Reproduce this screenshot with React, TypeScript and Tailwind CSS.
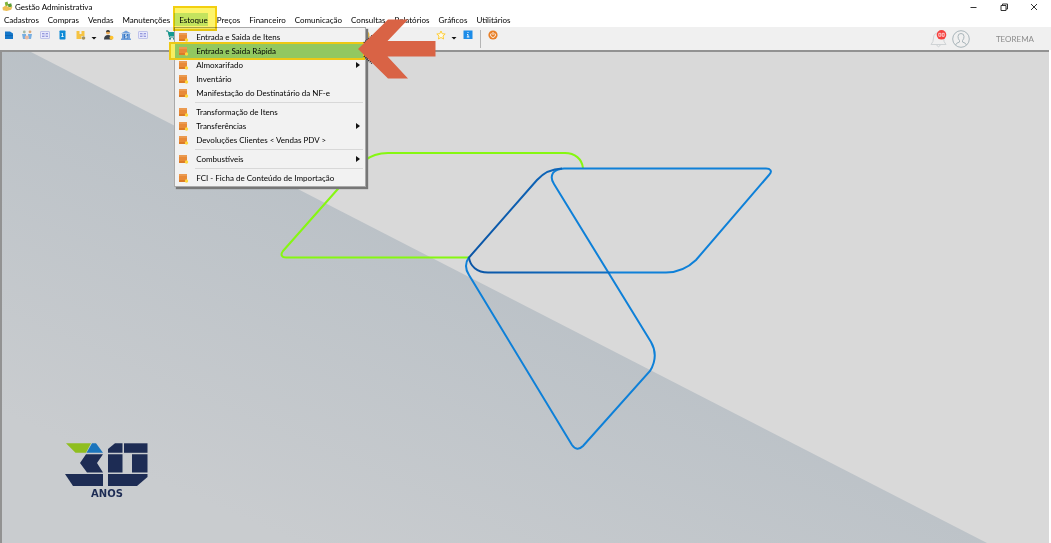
import type { ReactNode } from 'react'

const menusBefore = ['Cadastros', 'Compras', 'Vendas', 'Manutenções']
const menusAfter = ['Preços', 'Financeiro', 'Comunicação', 'Consultas', 'Relatórios', 'Gráficos', 'Utilitários']

type Entry = { label: string; sub?: boolean; active?: boolean }
const groups: Entry[][] = [
  [
    { label: 'Entrada e Saida de Itens' },
    { label: 'Entrada e Saida Rápida', active: true },
    { label: 'Almoxarifado', sub: true },
    { label: 'Inventário' },
    { label: 'Manifestação do Destinatário da NF-e' },
  ],
  [
    { label: 'Transformação de Itens' },
    { label: 'Transferências', sub: true },
    { label: 'Devoluções Clientes < Vendas PDV >' },
  ],
  [{ label: 'Combustíveis', sub: true }],
  [{ label: 'FCI - Ficha de Conteúdo de Importação' }],
]

function BoxIcon() {
  return (
    <svg viewBox="0 0 10 10" className="block size-[10px] shrink-0" aria-hidden="true">
      <rect x="0" y="1" width="8" height="8" fill="#e88a38" />
      <path d="M0 1h8v2h-8z" fill="#eb9a50" />
      <path d="M0 7h8v2h-8z" fill="#dc7a26" />
      <circle cx="7.500" cy="8" r="1.700" fill="#ffd83a" />
    </svg>
  )
}

function Tool({ label, children }: { label: string; children: ReactNode }) {
  return (
    <button type="button" aria-label={label} className="block size-[10px] shrink-0">
      <svg viewBox="0 0 10 10" className="block size-[10px]">{children}</svg>
    </button>
  )
}

function DropTool({ label, children }: { label: string; children: ReactNode }) {
  return (
    <button type="button" aria-label={label} aria-haspopup="menu" className="block h-[10px] w-[22px] shrink-0">
      <svg viewBox="0 0 22 10" className="block h-[10px] w-[22px]">
        {children}
        <path d="M15.500 7h5l-2.500 2.500z" fill="#111" />
      </svg>
    </button>
  )
}

function Card() {
  return (
    <>
      <rect x=".5" y="1.500" width="9" height="7" rx=".6" fill="#e9eafc" stroke="#b3b6e6" strokeWidth=".8" />
      <path d="M2 3.700h2.500M5.700 3.700h2.300M2 6.300h2.500M5.700 6.300h2.300" stroke="#8286d4" />
      <path d="M2.200 5h5.500" stroke="#b5b8ea" strokeWidth=".7" />
    </>
  )
}

function Artwork() {
  return (
    <svg viewBox="0 0 1047 491" preserveAspectRatio="xMidYMid slice" className="absolute inset-0 size-full" aria-hidden="true">
      <defs>
        <linearGradient id="slope" gradientUnits="userSpaceOnUse" x1="330" y1="150" x2="180" y2="492">
          <stop offset="0" stopColor="#b9c0c6" />
          <stop offset="1" stopColor="#c9cccf" />
        </linearGradient>
        <linearGradient id="fold" gradientUnits="userSpaceOnUse" x1="468" y1="0" x2="612" y2="0">
          <stop offset="0" stopColor="#0b55a5" />
          <stop offset="1" stopColor="#0f6fc4" />
        </linearGradient>
      </defs>
      <g transform="translate(-2 -52)">
        <path d="M0 51H29L987 543H0z" fill="url(#slope)" />
        <g fill="none" strokeWidth="2">
          <path d="M583 168C582 159 575 153 565 153H388Q374 153 364 161Q358 165 352 173L283 251C280 255 282 257.500 286 257.500H469" stroke="#86f711" />
          <path d="M610 272.500H666Q683 272.500 696 260L769 175C773 171 770 168.500 766 168.500H564Q556 169 553 173Q550 178 554 184L651 342Q659 356 650 371L583 446Q577 452 572 445L469 275Q463 266 469 257" stroke="#0e80d8" />
          <path d="M562 168.500Q547 169 537 180L469 257.500C470 266 477 272.500 488 272.500H610" stroke="url(#fold)" />
        </g>
        <g fill="#1d2c54">
          <path d="M66 443.300H91L86 452.800H75.500z" fill="#8fbe1f" />
          <path d="M92 443.300H96L103 452.800H86.500z" fill="#1b75bc" />
          <path d="M86 454.200H103L97 463L103 472.500H87L80 463z" />
          <path d="M65 474H103V486H73z" />
          <path d="M108 449L115 443.300H122.500V452.800H108z" />
          <path d="M124 443.300H147.500V452.800H124z" />
          <path d="M108 454.200H122.500V472.500H108zM132 454.200H147.500V472.500H132z" />
          <path d="M108 474H147.500V477L137 486H108z" />
        </g>
        <text x="107" y="497" textAnchor="middle" fill="#1d2c54" className="font-['DejaVu_Sans'] text-[10px] font-bold">ANOS</text>
      </g>
    </svg>
  )
}

export default function App() {
  return (
    <div className="relative flex min-h-screen flex-col overflow-hidden bg-white font-['Lato',sans-serif] text-[8px] leading-[14px] text-black">
      <header className="flex h-[13px] items-center pl-[2px] pr-[12px]">
        <svg viewBox="0 0 12 12" className="size-[11px]" aria-hidden="true">
          <path d="M3 1.500L6 .5L7 4.500L4 6z" fill="#7fb43a" />
          <path d="M6.500 3.500L10 2.500L11 6L7 7z" fill="#5b9b30" />
          <path d="M.5 7L4 5L8 7L11.500 6L10 9.500L5 11L1 10z" fill="#eebf55" />
        </svg>
        <h1 className="ml-[2px] flex-1">Gestão Administrativa</h1>
        <div className="flex gap-[20px]">
          <button type="button" aria-label="Minimizar"><svg viewBox="0 0 10 10" className="size-[10px]"><path d="M1.500 5.500h6" stroke="#333" /></svg></button>
          <button type="button" aria-label="Restaurar"><svg viewBox="0 0 10 10" className="size-[10px]"><path d="M2 3.500h5v5h-5zM3.500 3.500v-1.500h5v5h-1.500" fill="none" stroke="#333" /></svg></button>
          <button type="button" aria-label="Fechar"><svg viewBox="0 0 10 10" className="size-[10px]"><path d="M2 2l6 6M8 2l-6 6" stroke="#333" /></svg></button>
        </div>
      </header>

      <nav className="flex h-[14px] items-center pl-[4px]" aria-label="Menu principal">
        <ul className="flex items-center gap-[9px]">
          {menusBefore.map((m) => <li key={m}><button type="button" className="block">{m}</button></li>)}
          <li className="relative">
            <button type="button" aria-expanded="true" className="relative z-20 block">Estoque</button>
            <span className="absolute left-[-5px] top-0 z-10 h-[13px] w-[34px] bg-[#c6eee0]" />
            <div role="menu" className="absolute left-[-5px] top-[14px] z-20 w-[192px] border border-[#a9a9a9] bg-[#f2f2f2] pb-px pt-[2px] shadow-[2px_2px_1px_#777]">
              {groups.map((group, i) => (
                <div key={i} className={i ? "before:my-[2px] before:ml-[20px] before:mr-[2px] before:block before:h-px before:bg-[#d8d8d8]" : ""}>
                  {group.map((e) => (
                    <button key={e.label} type="button" role="menuitem" className="relative flex w-full items-center pl-[4px] pr-[5px] text-left">
                      {e.active && (
                        <>
                          <span className="absolute -inset-y-px left-[-6px] right-0 bg-[#f7ee62]" />
                          <span className="absolute -inset-y-px left-0 right-0 bg-[#92c860]" />
                          <span className="absolute inset-y-[-2px] left-[-6px] right-0 border-2 border-[#edc815]" />
                        </>
                      )}
                      <span className="relative"><BoxIcon /></span>
                      <span className="relative ml-[7px] flex-1 whitespace-nowrap">{e.label}</span>
                      {e.sub && <svg viewBox="0 0 4 6" className="h-[6px] w-[4px]" aria-hidden="true"><path d="M0 0l4 3-4 3z" fill="#111" /></svg>}
                    </button>
                  ))}
                </div>
              ))}
            </div>
            <span className="pointer-events-none absolute left-[-6px] top-[-7px] z-30 h-[25px] w-[44px] border-2 border-[#f3cf10] bg-[#fdf46b] mix-blend-multiply" />
          </li>
          {menusAfter.map((m) => <li key={m}><button type="button" className="block">{m}</button></li>)}
        </ul>
      </nav>

      <div className="flex h-[23px] items-start bg-[#f0f0f0] pl-[4px] pr-[17px] pt-[3px]" role="toolbar" aria-label="Ferramentas">
        <div className="flex w-[100px] gap-[8px]">
          <Tool label="Empresas"><path d="M1 1.500h5l3 2V9H1z" fill="#1577c9" /><path d="M1 5h8v1H1z" fill="#0d66b4" /></Tool>
          <Tool label="Pessoas"><path d="M0 4h4v5H1zM6 4h4l-1 5H6.500z" fill="#76aee2" /><circle cx="2.300" cy="2" r="1.400" fill="#9fb8a8" /><circle cx="8" cy="1.800" r="1.400" fill="#d9a577" /><circle cx="4.800" cy="7.500" r="2" fill="#e9b9a0" /></Tool>
          <Tool label="Cartões"><Card /></Tool>
          <Tool label="Celular"><rect x="1.500" y=".5" width="6" height="9" rx=".7" fill="#0d8ad6" /><path d="M4.500 3.200v3.600M3.500 3.600h1M3.300 6.500h2.400" stroke="#fff" strokeWidth=".8" /></Tool>
          <DropTool label="Produtos"><path d="M.5 1h3v3h2V1h3v5h-8zM.5 6h5V9h-5z" fill="#f5c343" /><circle cx="7.500" cy="8" r="1.800" fill="#a39260" /></DropTool>
        </div>
        <div className="flex w-[62px] gap-[7px]">
          <Tool label="Clientes"><circle cx="4" cy="2.500" r="2" fill="#e8a955" /><path d="M2 2.200Q2 0 4 0t2 2.200q-2-1-4 0z" fill="#333" /><path d="M0 9.500Q0 5 4 5t4 4.500z" fill="#3a4048" /><circle cx="7.500" cy="7.700" r="2" fill="#ffc22e" /></Tool>
          <Tool label="Banco"><path d="M0 3.500L5 .5l5 3zM1 4h8v4.500H1zM0 8.500h10V10H0z" fill="#6f9fdb" /><path d="M3 4h4v4.500H3z" fill="#3978c4" /><path d="M6 4.700H4.500v1.500H6v1.500H4" fill="none" stroke="#fff" strokeWidth=".7" /></Tool>
          <Tool label="Cheques"><Card /></Tool>
        </div>
        <div className="flex flex-1">
          <Tool label="Vendas"><path d="M0 1h2l1.500 6H9" fill="none" stroke="#11877f" /><path d="M2 2h8L8.500 6H3.200z" fill="#129a90" /><circle cx="4" cy="8.700" r="1" fill="#11877f" /><circle cx="8" cy="8.700" r="1" fill="#11877f" /></Tool>
          <div className="ml-[184px]"><Tool label="Consultas"><circle cx="5" cy="5" r="4.500" fill="#e5b53a" /></Tool></div>
          <div className="ml-[66px]"><DropTool label="Favoritos"><path d="M5 1l1.200 2.700 3 .3-2.200 2 .6 3L5 7.500 2.400 9l.6-3L.8 4l3-.3z" fill="#fffbe8" stroke="#ffc928" strokeWidth=".9" /></DropTool></div>
          <div className="ml-[5px] flex">
            <Tool label="Informações"><rect x=".5" y=".5" width="9" height="8.500" fill="#1c8ce8" /><path d="M5 2v1M4 4.500h1V7M3.800 7h2.600" fill="none" stroke="#fff" strokeWidth=".9" /></Tool>
          </div>
          <div className="ml-[7px] flex h-[18px] border-l border-[#b5b5b5] pl-[7px]">
            <Tool label="Sair"><circle cx="5" cy="5" r="4.600" fill="#e87f27" /><path d="M3.300 3.300A2.400 2.400 0 1 0 6.700 3.300M5 2v3" fill="none" stroke="#fff" strokeWidth=".9" /></Tool>
          </div>
        </div>
        <div className="flex h-[18px] items-center text-[#8c8c8c]">
          <button type="button" aria-label="Notificações" className="block">
            <svg viewBox="0 0 18 18" className="block size-[18px]">
              <path d="M1 14.500Q3.500 12 3.500 8Q3.500 3 8.500 3T13.500 8Q13.500 12 16 14.500zM6.500 14.500q2 4.500 4 0" fill="none" stroke="#cfd3d5" strokeWidth="1" />
              <circle cx="11.500" cy="4.800" r="4.800" fill="#f5413f" />
              <path d="M8.800 3.300h2v3h-2zM12.200 3.300h2v3h-2z" fill="none" stroke="#fff" strokeWidth=".7" />
            </svg>
          </button>
          <button type="button" aria-label="Perfil" className="ml-[4px] block">
            <svg viewBox="0 0 18 18" className="block size-[18px]" fill="none" stroke="#a9b5ba">
              <circle cx="9" cy="9" r="8.300" />
              <path d="M3.500 15Q4 13 7.500 12V10.500Q6 9 6 6.500Q6 3.500 9 3.500T12 6.500Q12 9 10.500 10.500V12Q14 13 14.500 15" />
            </svg>
          </button>
          <span className="ml-[26px]">TEOREMA</span>
        </div>
      </div>

      <main className="relative mr-[2px] flex-1 border-l-2 border-t-2 border-[#929292] bg-[#d9d9d9]">
        <Artwork />
      </main>

      <svg viewBox="0 0 78 60" className="pointer-events-none absolute left-[358px] top-[19px] z-40 h-[60px] w-[78px]" aria-hidden="true">
        <path d="M6 24L15 16M6 37L15 45" stroke="#222" strokeWidth="2" strokeDasharray="1 1" />
        <path d="M0 30L30 .5H50L29.500 22H77.500V37.500H29.500L50 59.500H30z" fill="#d96345" />
      </svg>
    </div>
  )
}
